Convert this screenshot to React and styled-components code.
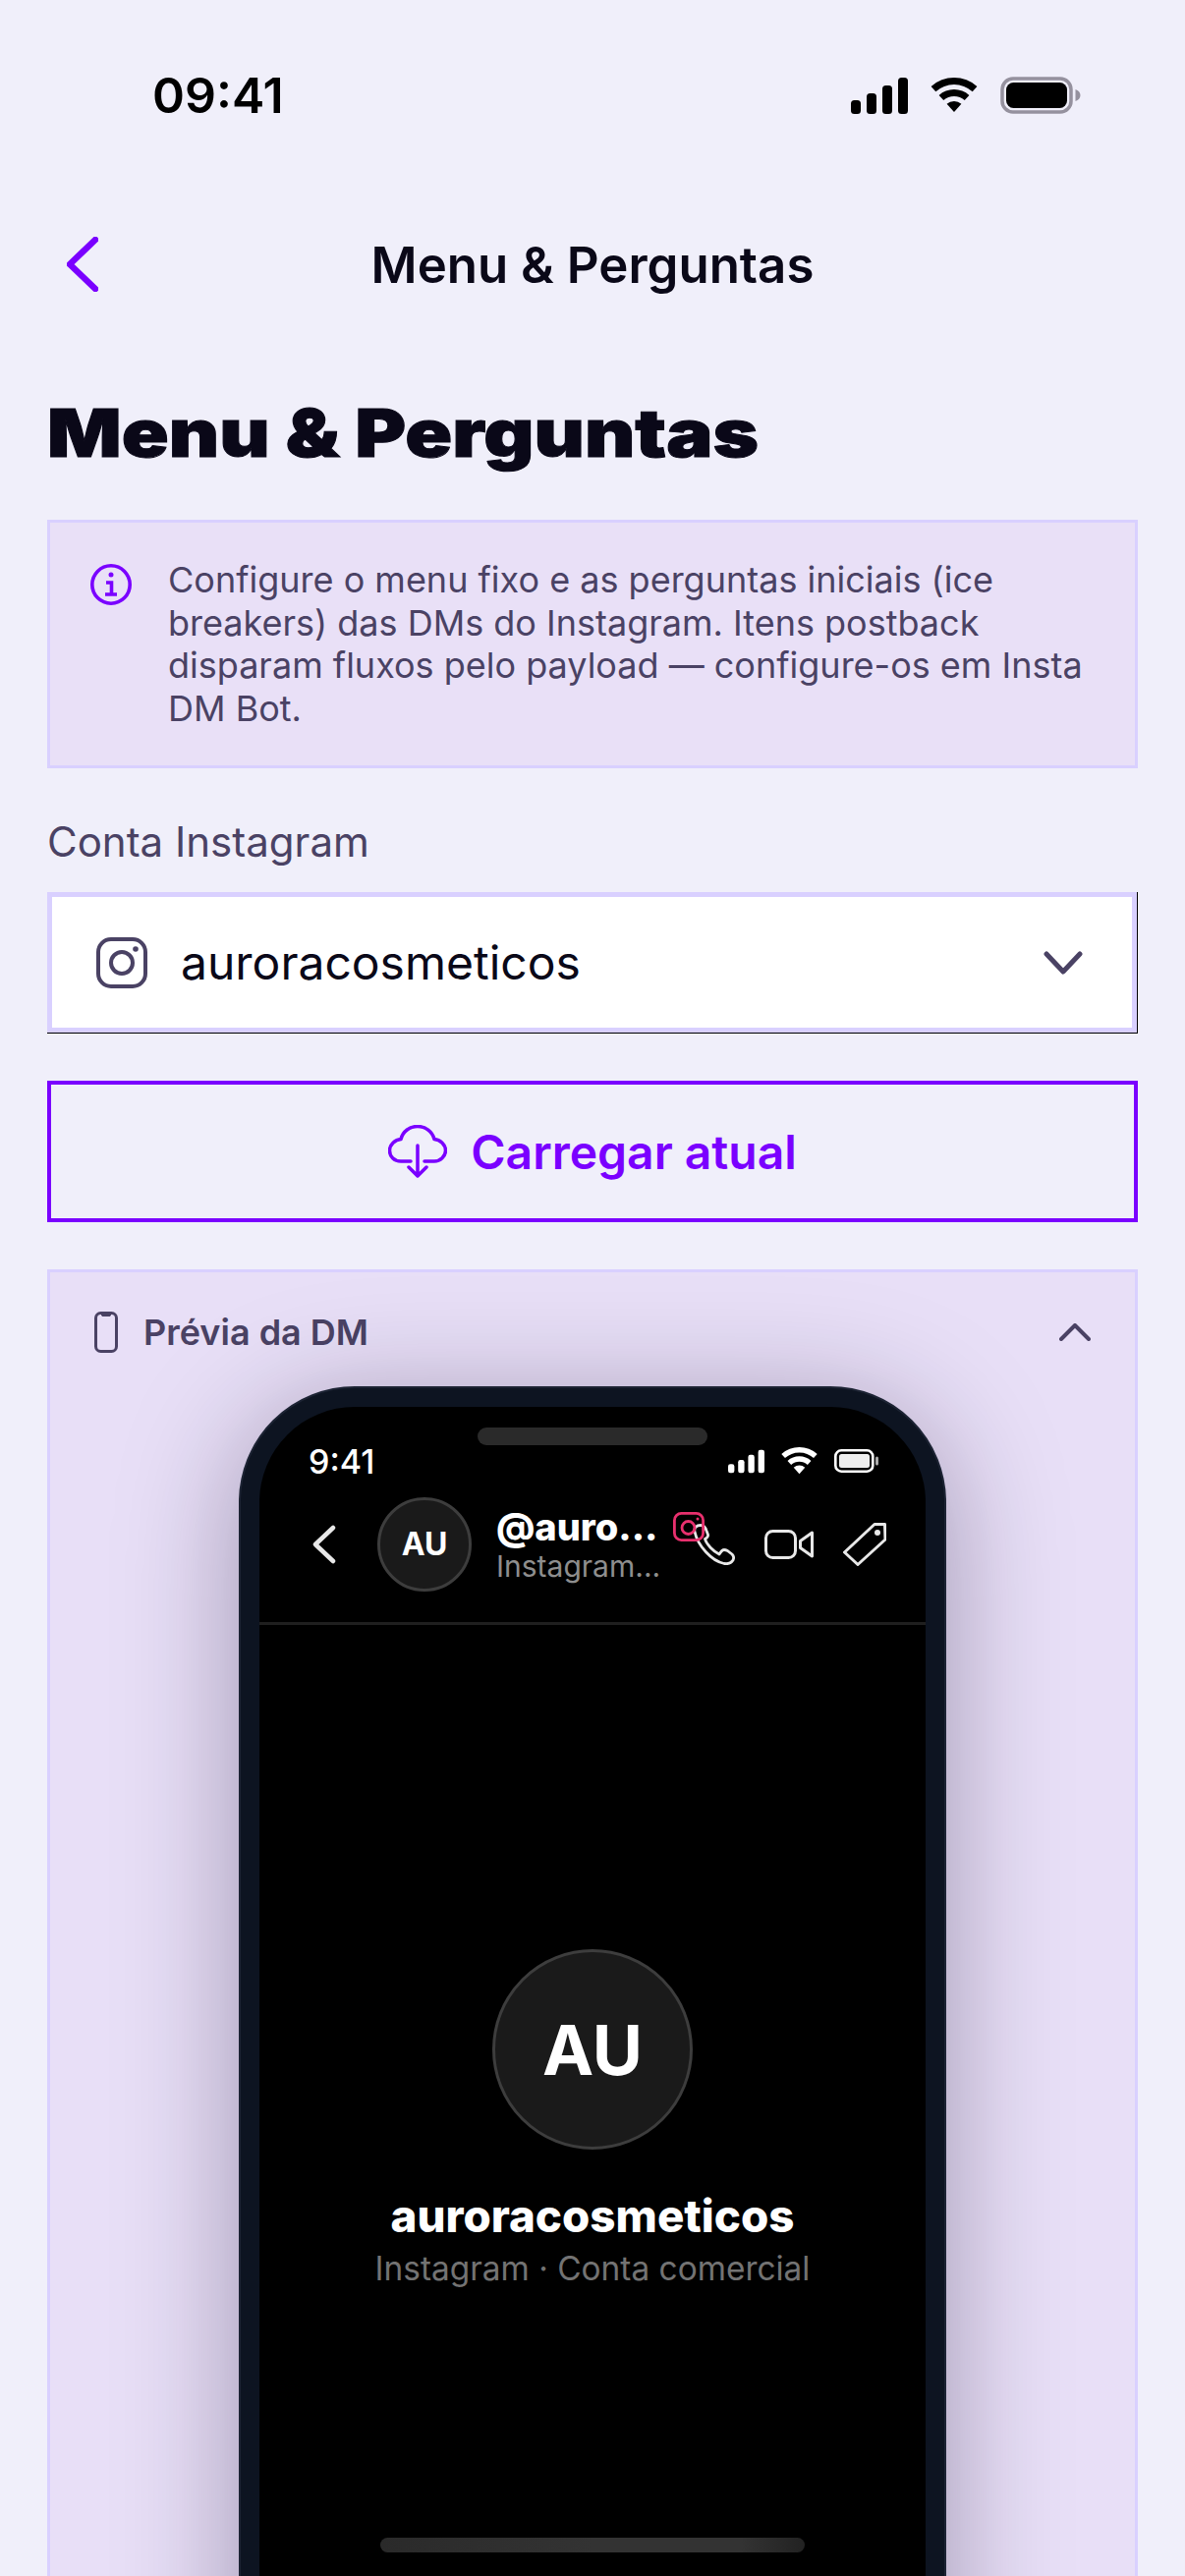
import React from 'react';
import styled, { createGlobalStyle } from 'styled-components';

const Global = createGlobalStyle`
  html, body { margin: 0; padding: 0; background: #f0effa; }
  body { font-family: Inter, "Liberation Sans", sans-serif; }
  * { box-sizing: border-box; }
`;

const Page = styled.div`
  width: 1206px;
  height: 2622px;
  overflow: hidden;
  display: flex;
  flex-direction: column;
  background: #f0effa;
  color: #0a0818;
`;

const StatusBar = styled.div`
  flex: none;
  height: 64px;
  margin-top: 65px;
  padding: 0 106px 0 155px;
  display: flex;
  align-items: center;
  justify-content: space-between;
`;

const Clock = styled.span`
  font-size: 50px;
  font-weight: 600;
  color: #000;
`;

const StatusIcons = styled.div`
  display: flex;
  align-items: center;
  gap: 22px;
`;

const NavBar = styled.div`
  position: relative;
  flex: none;
  margin-top: 98px;
  height: 84px;
  display: flex;
  align-items: center;
  justify-content: center;
  font-size: 51px;
  font-weight: 600;
`;

const BackButton = styled.div`
  position: absolute;
  left: 68px;
  top: 14px;
  display: flex;
`;

const Content = styled.div`
  padding: 0 48px;
  display: flex;
  flex-direction: column;
`;

const Title = styled.h1`
  margin: 88px 0 0;
  font-size: 67px;
  line-height: 84px;
  font-weight: 900;
  color: #0a0818;
  transform: scaleX(1.182);
  transform-origin: left center;
  -webkit-text-stroke: 1px #0a0818;
  white-space: nowrap;
`;

const InfoBox = styled.div`
  margin-top: 46px;
  height: 253px;
  border: 3px solid #d9d0ff;
  background: #e9e0f7;
  padding: 37px 40px 0 41px;
  display: flex;
  gap: 37px;
`;

const InfoIcon = styled.svg`
  flex: none;
  margin-top: 5px;
`;

const InfoText = styled.p`
  margin: 0;
  font-size: 36px;
  line-height: 43.5px;
  color: #4a4264;
`;

const Label = styled.div`
  margin-top: 47px;
  font-size: 42px;
  line-height: 56px;
  color: #4a4264;
`;

const SelectOuter = styled.div`
  margin-top: 23px;
  border-right: 1px solid #000;
  border-bottom: 1px solid #000;
`;

const Select = styled.div`
  height: 143px;
  border: 5px solid #d9d0ff;
  background: #fff;
  padding: 0 50px 0 45px;
  display: flex;
  align-items: center;
  font-size: 48px;
  color: #0a0818;
`;

const SelectText = styled.span`
  margin-left: 34px;
  flex: 1;
`;

const LoadButton = styled.div`
  margin-top: 48px;
  height: 144px;
  border: 4px solid #7a00ff;
  display: flex;
  align-items: center;
  justify-content: center;
  gap: 24px;
  color: #7a00ff;
  font-size: 48px;
  font-weight: 600;
`;

const PreviewCard = styled.div`
  margin-top: 48px;
  height: 1400px;
  border: 3px solid #d9d0ff;
  background: #e8dff7;
  padding: 0 45px;
  display: flex;
  flex-direction: column;
  overflow: hidden;
`;

const PreviewHead = styled.div`
  flex: none;
  height: 122px;
  display: flex;
  align-items: center;
  color: #4a4264;
  font-size: 36px;
  font-weight: 600;
`;

const PreviewTitle = styled.span`
  margin-left: 26px;
  flex: 1;
`;

const Phone = styled.div`
  align-self: center;
  width: 720px;
  flex: none;
  height: 1400px;
  margin-top: -6px;
  border-radius: 118px;
  border: 2px solid #1c2333;
  background: #0d1421;
  padding: 19px;
  box-shadow: 0 20px 120px rgba(20, 10, 40, 0.34);
`;

const Screen = styled.div`
  position: relative;
  height: 100%;
  border-radius: 97px;
  background: #000;
  color: #fff;
  display: flex;
  flex-direction: column;
`;

const Island = styled.div`
  position: absolute;
  top: 21px;
  left: 50%;
  margin-left: -117px;
  width: 234px;
  height: 18px;
  border-radius: 9px;
  background: #2a2a2a;
`;

const PhoneStatus = styled.div`
  flex: none;
  margin-top: 35px;
  height: 40px;
  padding: 0 48px 0 50px;
  display: flex;
  align-items: center;
  justify-content: space-between;
  font-size: 34px;
  font-weight: 500;
`;

const PhoneIcons = styled.div`
  display: flex;
  align-items: center;
  gap: 16px;
`;

const ChatHeader = styled.div`
  flex: none;
  height: 147px;
  border-bottom: 3px solid #1f1f1f;
  padding: 0 40px 15px 54px;
  display: flex;
  align-items: center;
`;

const ChatBack = styled.svg`
  flex: none;
  margin-right: 42px;
`;

const Avatar = styled.div`
  border-radius: 50%;
  border: 3px solid #3d3d3d;
  width: ${(p) => p.$size}px;
  height: ${(p) => p.$size}px;
  font-size: ${(p) => p.$font}px;
  background: #1a1a1a;
  display: flex;
  align-items: center;
  justify-content: center;
  font-weight: 700;
  flex: none;
`;

const ChatNames = styled.div`
  margin-left: 25px;
  width: 180px;
  flex: none;
`;

const ChatName = styled.div`
  font-size: 38px;
  line-height: 44px;
  font-weight: 800;
`;

const ChatSub = styled.div`
  font-size: 30px;
  line-height: 36px;
  color: #8e8e8e;
`;

const ChatIcons = styled.div`
  position: relative;
  margin-left: auto;
  display: flex;
  align-items: center;
  gap: 30px;
`;

const IgBadge = styled.div`
  position: absolute;
  left: -20px;
  top: -11px;
  display: flex;
`;

const Profile = styled.div`
  flex: 1;
  display: flex;
  flex-direction: column;
  align-items: center;
  padding-top: 330px;
`;

const ProfileName = styled.div`
  margin-top: 40px;
  font-size: 45.700px;
  line-height: 56px;
  font-weight: 800;
`;

const ProfileSub = styled.div`
  margin-top: 4px;
  font-size: 33.400px;
  line-height: 42px;
  color: #737373;
`;

const HomeBar = styled.div`
  position: absolute;
  top: 1151px;
  left: 50%;
  margin-left: -216px;
  width: 432px;
  height: 15px;
  border-radius: 8px;
  background: linear-gradient(90deg, #2a2a2a, #333 50%, #333 85%, #222);
`;

const Signal = ({ c, w = 58, h = 37 }) => (
  <svg width={w} height={h} viewBox="0 0 58 37" fill={c}>
    <rect x="0" y="23" width="10" height="14" rx="3.500" />
    <rect x="16" y="16" width="10" height="21" rx="3.500" />
    <rect x="32" y="8" width="10" height="29" rx="3.500" />
    <rect x="48" y="0" width="10" height="37" rx="3.500" />
  </svg>
);

const Wifi = ({ c, w = 50, h = 36 }) => (
  <svg width={w} height={h} viewBox="0 0 50 36" fill={c}>
    <path d="M1.600 9A35 35 0 0 1 48.400 9L43.700 14.200A28 28 0 0 0 6.300 14.200Z" />
    <path d="M9.600 17.900A23 23 0 0 1 40.400 17.900L35.700 23.100A16 16 0 0 0 14.300 23.100Z" />
    <path d="M17.600 26.800A11 11 0 0 1 32.400 26.800L25 35Z" />
  </svg>
);

function Cloud() {
  return (
    <svg width="60" height="54" viewBox="0 0 60 54" fill="none" stroke="#7a00ff" strokeWidth="3.500" strokeLinecap="round" strokeLinejoin="round">
      <path d="M23 37H13C6 37 1.500 32 1.500 26 1.500 20 7 15 13 14.500 15 6.500 22 1.500 30 1.500S45 7 47 14.500C53 15 58.500 20 58.500 26 58.500 32 53 37 47 37H37" />
      <path d="M30 21V51.500M21 43l9 9 9-9" />
    </svg>
  );
}

export default function App() {
  return (
    <Page>
      <Global />
      <StatusBar>
        <Clock>09:41</Clock>
        <StatusIcons>
          <Signal c="#000" />
          <Wifi c="#000" />
          <svg width="82" height="38" viewBox="0 0 82 38">
            <rect x="2" y="2" width="70" height="34" rx="11" fill="none" stroke="#95919e" strokeWidth="3.500" />
            <rect x="6" y="6" width="62" height="26" rx="7.500" fill="#000" />
            <path d="M76.500 13c3 1 5 3 5 6s-2 5-5 6z" fill="#95919e" />
          </svg>
        </StatusIcons>
      </StatusBar>
      <NavBar>
        <BackButton>
          <svg width="32" height="56" viewBox="0 0 32 56" fill="none" stroke="#7a00ff" strokeWidth="6.500" strokeLinecap="round" strokeLinejoin="round">
            <path d="M29 3 3 28l26 25" />
          </svg>
        </BackButton>
        Menu &amp; Perguntas
      </NavBar>
      <Content>
        <Title>Menu &amp; Perguntas</Title>
        <InfoBox>
          <InfoIcon width="42" height="42" viewBox="0 0 42 42" fill="none" stroke="#7a00ff" strokeWidth="3.600">
            <circle cx="21" cy="21" r="19.200" />
            <path d="M16 19h5.500v12M15 31h12" />
            <circle cx="21" cy="11" r="2.500" fill="#7a00ff" stroke="none" />
          </InfoIcon>
          <InfoText>
            Configure o menu fixo e as perguntas iniciais (ice breakers) das DMs do Instagram. Itens postback disparam fluxos pelo payload — configure-os em Insta DM Bot.
          </InfoText>
        </InfoBox>
        <Label>Conta Instagram</Label>
        <SelectOuter>
          <Select>
            <svg width="52" height="52" viewBox="0 0 52 52" fill="none" stroke="#4a4264" strokeWidth="4">
              <rect x="2" y="2" width="48" height="48" rx="13" />
              <circle cx="26" cy="26" r="11" />
              <circle cx="40" cy="12" r="2.800" fill="#4a4264" stroke="none" />
            </svg>
            <SelectText>auroracosmeticos</SelectText>
            <svg width="40" height="24" viewBox="0 0 40 24" fill="none" stroke="#4a4264" strokeWidth="5" strokeLinecap="round" strokeLinejoin="round">
              <path d="M3 3 20 21 37 3" />
            </svg>
          </Select>
        </SelectOuter>
        <LoadButton>
          <Cloud />
          Carregar atual
        </LoadButton>
        <PreviewCard>
          <PreviewHead>
            <svg width="24" height="42" viewBox="0 0 24 42" fill="none" stroke="#4a4264" strokeWidth="3">
              <rect x="1.500" y="1.500" width="21" height="39" rx="5" />
              <path d="M7 2.500h10l-1 2H8z" fill="#4a4264" strokeWidth="1" />
            </svg>
            <PreviewTitle>Prévia da DM</PreviewTitle>
            <svg width="32" height="18" viewBox="0 0 32 18" fill="none" stroke="#4a4264" strokeWidth="4" strokeLinecap="round" strokeLinejoin="round">
              <path d="M2 16 16 2l14 14" />
            </svg>
          </PreviewHead>
          <Phone>
            <Screen>
              <Island />
              <PhoneStatus>
                9:41
                <PhoneIcons>
                  <Signal c="#fff" w={37} h={27} />
                  <Wifi c="#fff" w={39} h={28} />
                  <svg width="45" height="24" viewBox="0 0 45 24">
                    <rect x="1.300" y="1.300" width="38" height="21.400" rx="6" fill="none" stroke="#fff" strokeWidth="2.600" />
                    <rect x="5" y="5" width="31" height="14" rx="2.500" fill="#eee" />
                    <rect x="42" y="7.500" width="3" height="9" rx="1.500" fill="#aaa" />
                  </svg>
                </PhoneIcons>
              </PhoneStatus>
              <ChatHeader>
                <ChatBack width="24" height="40" viewBox="0 0 24 40" fill="none" stroke="#e8e8e8" strokeWidth="4.500" strokeLinecap="round" strokeLinejoin="round">
                  <path d="M21 3 3 20l18 17" />
                </ChatBack>
                <Avatar $size={96} $font={32}>AU</Avatar>
                <ChatNames>
                  <ChatName>@auro...</ChatName>
                  <ChatSub>Instagram...</ChatSub>
                </ChatNames>
                <ChatIcons>
                  <IgBadge>
                    <svg width="32" height="30" viewBox="0 0 32 30" fill="none" stroke="#e8306e" strokeWidth="2.800">
                      <rect x="1.400" y="1.400" width="29.200" height="27.200" rx="7" />
                      <circle cx="15.500" cy="16" r="6.500" />
                      <circle cx="25" cy="7" r="1.500" fill="#e8306e" stroke="none" />
                    </svg>
                  </IgBadge>
                  <svg width="43" height="42" viewBox="0 0 43 42" fill="none" stroke="#e8e8e8" strokeWidth="2.800" strokeLinejoin="round">
                    <path d="M2 8C1 4 4 1.500 8 1.500 11 1.500 13 4 14 7L15.500 11C16 13 15 14 12.500 15.500 14 21 21 28 27 31 28.500 28.500 30 26.500 32 26.500 33.500 26.500 34.500 27 35.500 27.500L40 31C42 33 42 35 41 37 39 40 35 41 32 40.500 19 38 5 22 2 8Z" />
                  </svg>
                  <svg width="50" height="30" viewBox="0 0 50 30" fill="none" stroke="#e8e8e8" strokeWidth="3" strokeLinejoin="round">
                    <rect x="1.500" y="1.500" width="30" height="27" rx="7" />
                    <path d="M48.500 3 36.500 11.500v7L48.500 27z" />
                  </svg>
                  <svg width="44" height="44" viewBox="0 0 44 44" fill="none" stroke="#e8e8e8" strokeWidth="3" strokeLinejoin="round">
                    <path d="M32 1.500 42.500 1.500 43 17 15 42.500 1.500 30z" />
                    <circle cx="35" cy="10" r="3" fill="#e8e8e8" stroke="none" />
                  </svg>
                </ChatIcons>
              </ChatHeader>
              <Profile>
                <Avatar $size={204} $font={70}>AU</Avatar>
                <ProfileName>auroracosmeticos</ProfileName>
                <ProfileSub>Instagram · Conta comercial</ProfileSub>
              </Profile>
              <HomeBar />
            </Screen>
          </Phone>
        </PreviewCard>
      </Content>
    </Page>
  );
}
